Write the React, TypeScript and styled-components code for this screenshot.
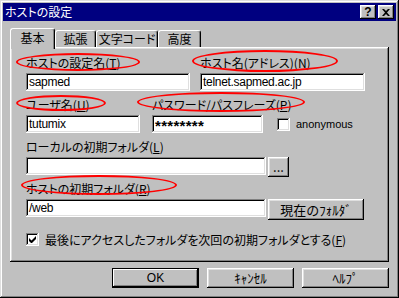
import React from 'react';
import styled, { createGlobalStyle, css } from 'styled-components';

// 型定義
interface Ring {
  x: number;
  y: number;
  w: number;
  h: number;
}

const GlobalStyle = createGlobalStyle`
  html, body {
    margin: 0;
    padding: 0;
    background: #c0c0c0;
  }
  body {
    font-family: "Noto Sans CJK JP", "Liberation Sans", sans-serif;
    font-size: 12px;
    font-feature-settings: "palt";
    color: #000;
  }
`;

const raised = css`
  box-shadow: inset -1px -1px #000, inset 1px 1px #fff, inset -2px -2px #808080, inset 2px 2px #dfdfdf;
`;

const sunken = css`
  box-shadow: inset -1px -1px #fff, inset 1px 1px #808080, inset -2px -2px #dfdfdf, inset 2px 2px #000;
`;

// ウィンドウ
const Window = styled.div`
  width: 399px;
  height: 298px;
  box-sizing: border-box;
  padding: 3px;
  background: #c0c0c0;
  box-shadow: inset -1px -1px #000, inset 1px 1px #dfdfdf, inset -2px -2px #808080, inset 2px 2px #fff;
  display: flex;
  flex-direction: column;
`;

const TitleBar = styled.div`
  height: 18px;
  background: #000080;
  display: flex;
  align-items: center;
  padding-left: 2px;
  color: #fff;
  line-height: 14px;
`;

const Title = styled.span`
  flex: 1;
`;

const TitleButton = styled.button`
  width: 16px;
  height: 14px;
  padding: 0;
  margin-left: 2px;
  border: none;
  background: #c0c0c0;
  ${raised};
  display: flex;
  align-items: center;
  justify-content: center;
  font-family: "Liberation Sans", sans-serif;
  font-weight: bold;
  font-size: 12px;
  line-height: 12px;
  color: #000;
  &:last-child {
    margin-right: 2px;
  }
`;

const Body = styled.div`
  flex: 1;
  display: flex;
  flex-direction: column;
  padding: 7px 7px 0 7px;
`;

// タブ
const TabStrip = styled.div`
  height: 19px;
  display: flex;
  align-items: flex-end;
`;

const Tab = styled.div<{ $active?: boolean; $w: number }>`
  width: ${p => p.$w}px;
  height: ${p => (p.$active ? 21 : 17)}px;
  margin-bottom: ${p => (p.$active ? -2 : 0)}px;
  box-sizing: border-box;
  background: #c0c0c0;
  border-top: 1px solid #fff;
  border-left: 1px solid #fff;
  border-right: 1px solid #000;
  border-top-left-radius: 3px;
  border-top-right-radius: 3px;
  box-shadow: inset -1px 0 #808080;
  position: relative;
  z-index: ${p => (p.$active ? 1 : 0)};
  display: flex;
  justify-content: center;
  padding-top: ${p => (p.$active ? 2 : 1)}px;
  line-height: 14px;
  white-space: nowrap;
`;

const Panel = styled.div`
  height: 215px;
  box-sizing: border-box;
  ${raised};
  padding: 9px 0 0 16px;
  display: flex;
  flex-direction: column;
`;

const Row = styled.div<{ $gap: number }>`
  display: flex;
  align-items: flex-end;
  gap: ${p => p.$gap}px;
  height: 38px;
  margin-bottom: 4px;
`;

const Field = styled.div<{ $w: number }>`
  width: ${p => p.$w}px;
  display: flex;
  flex-direction: column;
  align-self: flex-start;
`;

const Label = styled.label<{ $ring?: Ring }>`
  position: relative;
  display: block;
  height: 14px;
  line-height: 14px;
  margin-bottom: 3px;
  white-space: nowrap;
  ${p =>
    p.$ring &&
    css`
      &::after {
        content: '';
        position: absolute;
        left: ${p.$ring.x}px;
        top: ${p.$ring.y}px;
        width: ${p.$ring.w}px;
        height: ${p.$ring.h}px;
        box-sizing: border-box;
        border: 2px solid #ff0000;
        border-radius: 50%;
        pointer-events: none;
      }
    `}
`;

const ControlLine = styled.div`
  display: flex;
  gap: 2px;
  height: 21px;
  align-items: flex-start;
`;

const Input = styled.div<{ $w?: number; $secret?: boolean }>`
  width: ${p => (p.$w ? `${p.$w}px` : '100%')};
  height: 18px;
  box-sizing: border-box;
  background: #fff;
  ${sunken};
  padding: ${p => (p.$secret ? '2px 3px 0' : '0 3px')};
  font-family: "Liberation Sans", sans-serif;
  font-size: ${p => (p.$secret ? 15 : 12)}px;
  font-weight: ${p => (p.$secret ? 'bold' : 'normal')};
  line-height: 18px;
  letter-spacing: ${p => (p.$secret ? '0.3px' : '-0.3px')};
  white-space: nowrap;
  overflow: hidden;
`;

const Button = styled.button<{ $w: number; $h?: number }>`
  width: ${p => p.$w}px;
  height: ${p => p.$h ?? 20}px;
  padding: 0;
  border: none;
  background: #c0c0c0;
  ${raised};
  font-family: "Noto Sans CJK JP", "Liberation Sans", sans-serif;
  font-size: 13px;
  line-height: 14px;
  color: #000;
`;

const CheckWrap = styled.label`
  display: flex;
  align-items: center;
  gap: 6px;
  height: 18px;
  white-space: nowrap;
`;

const CheckBox = styled.span`
  width: 13px;
  height: 13px;
  box-sizing: border-box;
  background: #fff;
  ${sunken};
  display: flex;
  align-items: center;
  justify-content: center;
  flex: none;
`;

const LatinText = styled.span`
  font-family: "Liberation Sans", sans-serif;
  font-size: 11px;
`;

const CheckRow = styled.div`
  margin-top: 6px;
  display: flex;
`;

const ButtonBar = styled.div`
  display: flex;
  justify-content: flex-end;
  gap: 8px;
  margin-top: 6px;
`;

const DefaultButton = styled(Button)`
  box-shadow: inset -1px -1px #000, inset 1px 1px #000, inset -2px -2px #000, inset 2px 2px #fff,
    inset -3px -3px #808080;
  font-family: "Liberation Sans", sans-serif;
  font-size: 12px;
`;

const Check: React.FC<{ checked?: boolean }> = ({ checked }) => (
  <CheckBox>
    {checked && (
      <svg width="7" height="7" viewBox="0 0 7 7">
        <path d="M0 2v3l2 2h1l4-4V0L2.5 4.5z" fill="#000" />
      </svg>
    )}
  </CheckBox>
);

const App: React.FC = () => {
  return (
    <>
      <GlobalStyle />
      <Window>
        <TitleBar>
          <Title>ホストの設定</Title>
          <TitleButton>?</TitleButton>
          <TitleButton>
            <svg width="8" height="7" viewBox="0 0 8 7">
              <path d="M0 0h2l2 2 2-2h2L5 3.5 8 7H6L4 5 2 7H0l3-3.5z" fill="#000" />
            </svg>
          </TitleButton>
        </TitleBar>
        <Body>
          <TabStrip>
            <Tab $active $w={45}>基本</Tab>
            <Tab $w={41}>拡張</Tab>
            <Tab $w={62}>文字コード</Tab>
            <Tab $w={43}>高度</Tab>
          </TabStrip>
          <Panel>
            <Row $gap={10}>
              <Field $w={164}>
                <Label $ring={{ x: -10, y: -3, w: 124, h: 18 }}>
                  ホストの設定名(<u>T</u>)
                </Label>
                <ControlLine>
                  <Input>sapmed</Input>
                </ControlLine>
              </Field>
              <Field $w={165}>
                <Label $ring={{ x: -8, y: -6, w: 146, h: 22 }}>
                  ホスト名(アドレス)(<u>N</u>)
                </Label>
                <ControlLine>
                  <Input>telnet.sapmed.ac.jp</Input>
                </ControlLine>
              </Field>
            </Row>
            <Row $gap={12}>
              <Field $w={114}>
                <Label $ring={{ x: -10, y: -3, w: 90, h: 16 }}>
                  ユーザ名(<u>U</u>)
                </Label>
                <ControlLine>
                  <Input>tutumix</Input>
                </ControlLine>
              </Field>
              <Field $w={111}>
                <Label $ring={{ x: -15, y: -6, w: 168, h: 20 }}>
                  パスワード/パスフレーズ(<u>P</u>)
                </Label>
                <ControlLine>
                  <Input $secret>********</Input>
                </ControlLine>
              </Field>
              <Field $w={100}>
                <Label />
                <CheckWrap style={{ marginLeft: 2 }}>
                  <Check />
                  <LatinText>anonymous</LatinText>
                </CheckWrap>
              </Field>
            </Row>
            <Row $gap={0}>
              <Field $w={340}>
                <Label>
                  ローカルの初期フォルダ(<u>L</u>)
                </Label>
                <ControlLine>
                  <Input $w={240} />
                  <Button $w={21} $h={20}>...</Button>
                </ControlLine>
              </Field>
            </Row>
            <Row $gap={0}>
              <Field $w={340}>
                <Label $ring={{ x: -5, y: -7, w: 156, h: 20 }}>
                  ホストの初期フォルダ(<u>R</u>)
                </Label>
                <ControlLine>
                  <Input $w={240}>/web</Input>
                  <Button $w={96} $h={21}>現在のﾌｫﾙﾀﾞ</Button>
                </ControlLine>
              </Field>
            </Row>
            <CheckRow>
              <CheckWrap>
                <Check checked />
                <span>最後にアクセスしたフォルダを次回の初期フォルダとする(<u>F</u>)</span>
              </CheckWrap>
            </CheckRow>
          </Panel>
          <ButtonBar>
            <DefaultButton $w={87}>OK</DefaultButton>
            <Button $w={87}>ｷｬﾝｾﾙ</Button>
            <Button $w={87}>ﾍﾙﾌﾟ</Button>
          </ButtonBar>
        </Body>
      </Window>
    </>
  );
};

export default App;
